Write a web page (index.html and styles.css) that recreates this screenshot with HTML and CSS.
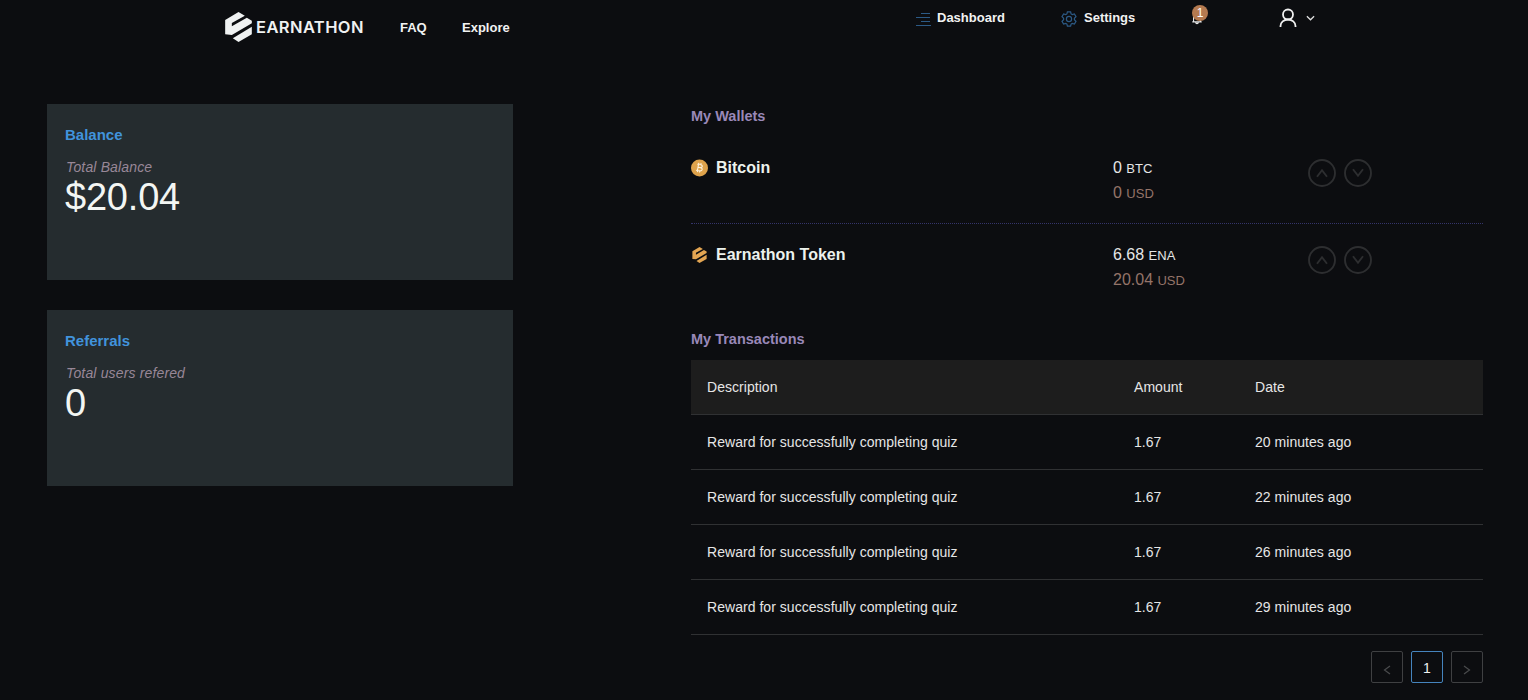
FILE: index.html
```html
<!DOCTYPE html>
<html lang="en">
<head>
    <meta charset="UTF-8">
    <title>Earnathon</title>
    <link rel="stylesheet" href="styles.css">
</head>
<body>
    <svg class="sprite">
        <symbol id="mark" viewBox="0 0 80 90">
            <path d="M0 24L40 0L59 11L20 33V43L65 17L80 26V34L20 69L0 67z"/>
            <path d="M80 44V67L40 90L23 79z"/>
        </symbol>
        <symbol id="up" viewBox="0 0 28 28">
            <circle cx="14" cy="14" r="13"/>
            <path d="M9 17.8L14 11.2L19 17.8"/>
        </symbol>
        <symbol id="down" viewBox="0 0 28 28">
            <circle cx="14" cy="14" r="13"/>
            <path d="M9 10.2L14 16.8L19 10.2"/>
        </symbol>
    </svg>

    <header class="header">
        <div class="nav-left">
            <a class="logo">
                <svg class="logo-mark"><use href="#mark"/></svg>
                <span class="logo-text">EARNATHON</span>
            </a>
            <a class="nav-link faq">FAQ</a>
            <a class="nav-link">Explore</a>
        </div>
        <div class="nav-right">
            <a class="nav-link menu-link">
                <svg class="nav-icon" viewBox="0 0 15 16"><path d="M5 2.5h9M0 6.5h14M5 10.5h9M0 14.5h15"/></svg>
                Dashboard
            </a>
            <a class="nav-link menu-link settings">
                <svg class="nav-icon" viewBox="0 0 16 16">
                    <path d="M6.4 .8h3.2l.5 2.1 1.2.7 2.1-.6 1.6 2.7-1.6 1.6v1.4l1.6 1.6-1.6 2.7-2.1-.6-1.2.7-.5 2.1H6.4l-.5-2.1-1.2-.7-2.1.6L1 10.300l1.600-1.600V7.300L1 5.700 2.600 3l2.100.6 1.200-.7z"/>
                    <circle cx="8" cy="8" r="2.600"/>
                </svg>
                Settings
            </a>
            <a class="bell">
                <svg class="bell-icon" viewBox="0 0 14 16"><path d="M3 12V6.500a4 4 0 0 1 8 0V12M1.500 12.500h11M5.500 13a1.500 1.500 0 0 0 3 0"/></svg>
                <span class="badge">1</span>
            </a>
            <a class="user">
                <svg class="user-icon" viewBox="0 0 18 20"><circle cx="9" cy="6.500" r="5"/><path d="M1.500 19v-1a7.500 6.500 0 0 1 15 0v1"/></svg>
                <svg class="caret" viewBox="0 0 10 8"><path d="M1 2L5 6L9 2"/></svg>
            </a>
        </div>
    </header>

    <main class="content">
        <section class="stats">
            <div class="card">
                <h3 class="card-title">Balance</h3>
                <div class="card-label">Total Balance</div>
                <div class="card-value">$20.04</div>
            </div>
            <div class="card">
                <h3 class="card-title">Referrals</h3>
                <div class="card-label">Total users refered</div>
                <div class="card-value">0</div>
            </div>
        </section>

        <section class="account">
            <h3 class="section-title">My Wallets</h3>
            <div class="wallet">
                <div class="wallet-name">
                    <svg class="coin" viewBox="0 0 18 18">
                        <circle class="coin-fill" cx="8.500" cy="9" r="8.500"/>
                        <path class="coin-line" d="M6.300 5.200l3.600.6c2.200.5 1.700 2.900-.4 2.800l-2.300-.3M9.500 8.600c2.600.5 2 3.600-.8 3.200l-3.700-.6M7.500 5.400l-1 6M7.900 3.800l-.3 1.600M10.100 4.200l-.3 1.600M6.700 11.500l-.3 1.700M8.800 11.800l-.3 1.700"/>
                    </svg>
                    Bitcoin
                </div>
                <div class="wallet-sum">
                    <div class="sum">0 <span class="unit">BTC</span></div>
                    <div class="sum usd">0 <span class="unit">USD</span></div>
                </div>
                <div class="wallet-actions">
                    <svg class="arrow"><use href="#up"/></svg>
                    <svg class="arrow"><use href="#down"/></svg>
                </div>
            </div>
            <div class="wallet">
                <div class="wallet-name">
                    <svg class="coin token"><use href="#mark"/></svg>
                    Earnathon Token
                </div>
                <div class="wallet-sum">
                    <div class="sum">6.68 <span class="unit">ENA</span></div>
                    <div class="sum usd">20.04 <span class="unit">USD</span></div>
                </div>
                <div class="wallet-actions">
                    <svg class="arrow"><use href="#up"/></svg>
                    <svg class="arrow"><use href="#down"/></svg>
                </div>
            </div>

            <h3 class="section-title">My Transactions</h3>
            <table class="data-table">
                <thead>
                    <tr>
                        <th class="col-desc">Description</th>
                        <th class="col-amount">Amount</th>
                        <th>Date</th>
                    </tr>
                </thead>
                <tbody>
                    <tr>
                        <td>Reward for successfully completing quiz</td>
                        <td>1.67</td>
                        <td>20 minutes ago</td>
                    </tr>
                    <tr>
                        <td>Reward for successfully completing quiz</td>
                        <td>1.67</td>
                        <td>22 minutes ago</td>
                    </tr>
                    <tr>
                        <td>Reward for successfully completing quiz</td>
                        <td>1.67</td>
                        <td>26 minutes ago</td>
                    </tr>
                    <tr>
                        <td>Reward for successfully completing quiz</td>
                        <td>1.67</td>
                        <td>29 minutes ago</td>
                    </tr>
                </tbody>
            </table>
            <div class="pagination">
                <a class="page"><svg class="page-icon" viewBox="0 0 8 10"><path d="M7 1L1.500 5L7 9"/></svg></a>
                <a class="page active">1</a>
                <a class="page"><svg class="page-icon" viewBox="0 0 8 10"><path d="M1 1L6.500 5L1 9"/></svg></a>
            </div>
        </section>
    </main>
</body>
</html>
```
FILE: styles.css
```css
* {
    margin: 0;
    padding: 0;
    box-sizing: border-box;
}

body {
    font-family: "Liberation Sans", Arial, sans-serif;
    font-size: 14px;
    line-height: 22px;
    background: #0c0d10;
    color: #e6e6e6;
    height: 700px;
    overflow: hidden;
}

svg {
    fill: none;
    flex-shrink: 0;
}

.sprite {
    display: none;
}

.header {
    display: flex;
    align-items: flex-start;
    height: 104px;
}

.nav-left {
    display: flex;
    align-items: center;
    width: 691px;
    height: 54px;
    padding-left: 225px;
}

.logo {
    display: flex;
    align-items: center;
    width: 175px;
}

.logo-mark {
    width: 27px;
    height: 30px;
    margin-right: 4px;
    fill: #f0f2f2;
}

.logo-text {
    font-family: Inter, "Liberation Sans", sans-serif;
    font-size: 16.5px;
    font-weight: 600;
    letter-spacing: 0.4px;
    color: #f0f2f2;
}

.nav-link {
    font-size: 13px;
    font-weight: bold;
    color: #f2f2f2;
}

.nav-left .nav-link {
    padding-top: 1px;
}

.faq {
    width: 62px;
}

.nav-right {
    display: flex;
    align-items: center;
    height: 36px;
    padding-left: 225px;
}

.menu-link {
    display: flex;
    align-items: center;
    width: 145px;
    gap: 6px;
}

.settings {
    width: 130px;
    gap: 7px;
}

.nav-icon {
    width: 15px;
    height: 16px;
    margin-top: 2px;
    stroke: #2c5a86;
    stroke-width: 1.2;
}

.settings .nav-icon {
    width: 16px;
}

.bell {
    position: relative;
    width: 88px;
    height: 16px;
}

.bell-icon {
    display: block;
    width: 12px;
    height: 16px;
    stroke: #e8e8e8;
    stroke-width: 1.3;
}

.badge {
    position: absolute;
    left: 1px;
    top: -5px;
    width: 16px;
    height: 16px;
    border-radius: 8px;
    background: #b57a50;
    color: #fff;
    font-size: 12px;
    line-height: 17px;
    text-align: center;
}

.user {
    display: flex;
    align-items: center;
    gap: 9px;
}

.user-icon {
    width: 18px;
    height: 20px;
    stroke: #f0f0f0;
    stroke-width: 1.8;
}

.caret {
    width: 9px;
    height: 8px;
    stroke: #e0e0e0;
    stroke-width: 1.4;
}

.content {
    display: flex;
    justify-content: space-between;
    padding: 0 45px 0 47px;
}

.stats {
    display: flex;
    flex-direction: column;
    gap: 30px;
    width: 466px;
}

.card {
    height: 176px;
    padding: 20px 18px;
    background: #252c2f;
}

.card-title {
    margin-bottom: 10px;
    font-size: 15px;
    color: #4193dc;
}

.card-label {
    padding-left: 1px;
    font-style: italic;
    letter-spacing: 0.15px;
    color: #988797;
}

.card-value {
    font-size: 38px;
    line-height: 38px;
    letter-spacing: -0.2px;
    color: #f3f6f3;
}

.account {
    width: 792px;
}

.section-title {
    padding-top: 1px;
    font-size: 14.5px;
    color: #9988b8;
}

.wallet {
    display: flex;
}

.wallet:nth-of-type(1) {
    height: 97px;
    padding-top: 28px;
    border-bottom: 1px dotted #34346a;
}

.wallet:nth-of-type(2) {
    height: 103px;
    padding-top: 18px;
}

.wallet-name {
    display: flex;
    align-items: center;
    gap: 7px;
    width: 422px;
    height: 25px;
    font-size: 16px;
    line-height: 25px;
    font-weight: bold;
    color: #edf2ed;
}

.coin {
    width: 18px;
    height: 18px;
    margin-top: 1px;
}

.coin-fill {
    fill: #dfa34c;
}

.coin-line {
    stroke: #fff3dd;
    stroke-width: 1.1;
}

.token {
    width: 15px;
    height: 16px;
    margin-left: 1px;
    margin-right: 2px;
    fill: #e3a552;
}

.wallet-sum {
    width: 195px;
}

.sum {
    height: 25px;
    font-size: 16px;
    line-height: 25px;
}

.unit {
    font-size: 13px;
    line-height: 13px;
}

.usd {
    color: #947469;
}

.wallet-actions {
    display: flex;
    gap: 8px;
    padding-top: 4px;
}

.arrow {
    width: 28px;
    height: 28px;
    stroke: #2d2e30;
    stroke-width: 1.9;
}

.data-table {
    width: 100%;
    margin-top: 10px;
    border-collapse: separate;
    border-spacing: 0;
    table-layout: fixed;
}

.data-table th,
.data-table td {
    height: 55px;
    padding: 0 16px;
    text-align: left;
    font-weight: normal;
    letter-spacing: 0.04px;
    border-bottom: 1px solid #303133;
}

.data-table th {
    background: #1d1d1d;
}

.col-desc {
    width: 427px;
}

.col-amount {
    width: 121px;
}

.pagination {
    display: flex;
    justify-content: flex-end;
    gap: 8px;
    margin-top: 16px;
}

.page {
    display: flex;
    align-items: center;
    justify-content: center;
    width: 32px;
    height: 32px;
    border: 1px solid #3f4042;
    border-radius: 2px;
}

.page.active {
    padding-top: 2px;
    border-color: #4584bd;
    color: #f0f0f0;
}

.page-icon {
    width: 8px;
    height: 10px;
    margin-top: 5px;
    stroke: #4a4b4d;
    stroke-width: 1.2;
}
```
